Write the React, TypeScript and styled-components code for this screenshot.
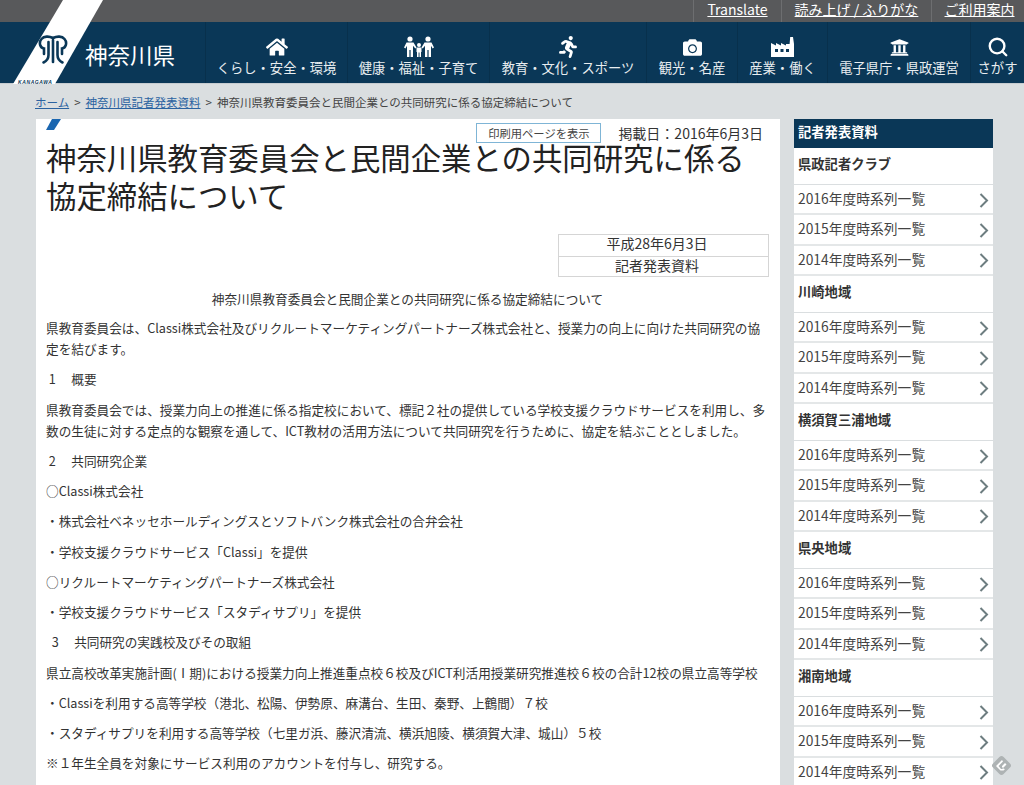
import React from 'react';
import styled, { createGlobalStyle } from 'styled-components';
import { FaHome, FaRunning, FaCamera, FaUniversity } from 'react-icons/fa';
import { FiSearch } from 'react-icons/fi';

const GlobalStyle = createGlobalStyle`
  html, body {
    margin: 0;
    height: 785px;
    overflow: hidden;
    background: #dadee0;
    color: #333;
    font-family: "Noto Sans CJK JP", "Noto Sans", sans-serif;
  }
  * { box-sizing: border-box; }
`;

const navItems = [
  { label: 'くらし・安全・環境', width: 142, icon: 'home' },
  { label: '健康・福祉・子育て', width: 142, icon: 'family' },
  { label: '教育・文化・スポーツ', width: 157, icon: 'run' },
  { label: '観光・名産', width: 91, icon: 'camera' },
  { label: '産業・働く', width: 90, icon: 'factory' },
  { label: '電子県庁・県政運営', width: 143, icon: 'bank' },
  { label: 'さがす', width: 54, icon: 'search' },
];

const paragraphs = [
  '県教育委員会は、Classi株式会社及びリクルートマーケティングパートナーズ株式会社と、授業力の向上に向けた共同研究の協\n定を結びます。',
  ' 1　 概要',
  '県教育委員会では、授業力向上の推進に係る指定校において、標記２社の提供している学校支援クラウドサービスを利用し、多\n数の生徒に対する定点的な観察を通して、ICT教材の活用方法について共同研究を行うために、協定を結ぶこととしました。',
  ' 2　 共同研究企業',
  '○Classi株式会社',
  '・株式会社ベネッセホールディングスとソフトバンク株式会社の合弁会社',
  '・学校支援クラウドサービス「Classi」を提供',
  '○リクルートマーケティングパートナーズ株式会社',
  '・学校支援クラウドサービス「スタディサプリ」を提供',
  '  3　 共同研究の実践校及びその取組',
  '県立高校改革実施計画(Ⅰ期)における授業力向上推進重点校６校及びICT利活用授業研究推進校６校の合計12校の県立高等学校',
  '・Classiを利用する高等学校（港北、松陽、伊勢原、麻溝台、生田、秦野、上鶴間）７校',
  '・スタディサプリを利用する高等学校（七里ガ浜、藤沢清流、横浜旭陵、横須賀大津、城山）５校',
  '※１年生全員を対象にサービス利用のアカウントを付与し、研究する。',
];

const groups = ['県政記者クラブ', '川崎地域', '横須賀三浦地域', '県央地域', '湘南地域'];
const years = ['2016', '2015', '2014'];

function NavIcon({ name }: { name: string }) {
  if (name === 'home') return <FaHome size={22} />;
  if (name === 'run') return <FaRunning size={22} />;
  if (name === 'camera') return <FaCamera size={19} />;
  if (name === 'bank') return <FaUniversity size={19} />;
  if (name === 'search') return <FiSearch size={22} strokeWidth={2.6} />;
  if (name === 'family') {
    return (
      <svg width="30" height="22" viewBox="0 0 30 22" fill="currentColor">
        <circle cx="6" cy="3" r="2.6" />
        <circle cx="24" cy="3" r="2.6" />
        <circle cx="15" cy="9" r="2" />
        <path d="M2.5 6.5h7l3 5-1.2 1-2.3-2.7V21H6.6v-7h-1.2v7H3V9.8L1.4 12.5 0 11.5z" />
        <path d="M20.5 6.5h7l2.5 5-1.4 1-1.6-2.7V21h-2.4v-7h-1.2v7H21V9.8L18.7 12.5l-1.2-1z" />
        <path d="M12.5 11.5h5V16h-.5v5h-1.5v-4.5h-.9V21h-1.6v-5h-.5z" />
      </svg>
    );
  }
  return (
    <svg width="24" height="20" viewBox="0 0 24 20" fill="currentColor">
      <path d="M0 6l5 2.6V6l5 2.6V6l5 2.6V7h3.6l.6-7H22l1 7v13H0zM4 12v3h3v-3zm5.500 0v3h3v-3zm5.500 0v3h3v-3z" fillRule="evenodd" />
    </svg>
  );
}

function Emblem() {
  return (
    <EmblemSvg viewBox="0 0 30 30" fill="none" stroke="#0a3757" strokeWidth="2.6" strokeLinecap="round">
      <path d="M15 5v22" />
      <path d="M10.500 7v13c0 4-2 6-5 7.500" />
      <path d="M19.500 7v13c0 4 2 6 5 7.500" />
      <path d="M15 3C11 1 6 1 3.500 4 .5 7.500 2 13 6 13.500V19" />
      <path d="M15 3c4-2 9-2 11.500 1 3 3.500 1.500 9-2.500 9.500V19" />
    </EmblemSvg>
  );
}

export default function App() {
  return (
    <>
      <GlobalStyle />
      <Stripe />
      <Emblem />
      <KanagawaMark>KANAGAWA</KanagawaMark>
      <UtilityBar>
        <UtilityLink $width={88}>Translate</UtilityLink>
        <UtilityLink $width={150}>読み上げ / ふりがな</UtilityLink>
        <UtilityLink $width={93}>ご利用案内</UtilityLink>
      </UtilityBar>
      <Header>
        <Brand>神奈川県</Brand>
        {navItems.map((item) => (
          <NavCell key={item.label} $width={item.width}>
            <IconSlot><NavIcon name={item.icon} /></IconSlot>
            <NavLabel>{item.label}</NavLabel>
          </NavCell>
        ))}
      </Header>
      <Breadcrumb>
        <Crumb>ホーム</Crumb><Sep>&gt;</Sep>
        <Crumb>神奈川県記者発表資料</Crumb><Sep>&gt;</Sep>
        <span>神奈川県教育委員会と民間企業との共同研究に係る協定締結について</span>
      </Breadcrumb>
      <Columns>
        <Main>
          <Accent />
          <MetaRow>
            <PrintButton>印刷用ページを表示</PrintButton>
            <PostDate>掲載日：2016年6月3日</PostDate>
          </MetaRow>
          <Title>神奈川県教育委員会と民間企業との共同研究に係る<br />協定締結について</Title>
          <InfoTable>
            <InfoRow>平成28年6月3日</InfoRow>
            <InfoRow>記者発表資料</InfoRow>
          </InfoTable>
          <Lead>神奈川県教育委員会と民間企業との共同研究に係る協定締結について</Lead>
          {paragraphs.map((p) => (
            <Paragraph key={p}>{p}</Paragraph>
          ))}
        </Main>
        <Sidebar>
          <SideHeading>記者発表資料</SideHeading>
          {groups.map((g) => (
            <div key={g}>
              <GroupTitle>{g}</GroupTitle>
              {years.map((y) => (
                <SideLink key={y}>
                  <SideLinkText>{y}年度時系列一覧</SideLinkText>
                  <svg width="10" height="15" viewBox="0 0 10 15" fill="none" stroke="#6d7d80" strokeWidth="2">
                    <path d="M1.500 1l6.500 6.500L1.500 14" />
                  </svg>
                </SideLink>
              ))}
            </div>
          ))}
        </Sidebar>
      </Columns>
      <FloatBadge>
        <svg width="14" height="14" viewBox="0 0 14 14" fill="#fff">
          <path d="M7 1L1 7l4.500 4.500h3L10 10H6L3.500 7 8 2.500z" />
          <path d="M7 7l3-3 1.500 1.500L8.500 8.500H7zM7 9.500h2.500L8.500 8.700z" />
        </svg>
      </FloatBadge>
    </>
  );
}

const Stripe = styled.div`
  position: absolute;
  left: 13px;
  top: 0;
  width: 90px;
  height: 84px;
  background: #fff;
  clip-path: polygon(50px 0, 90px 0, 42px 84px, 0 84px);
  z-index: 2;
`;

const EmblemSvg = styled.svg`
  position: absolute;
  left: 38px;
  top: 35px;
  width: 30px;
  height: 30px;
  z-index: 3;
`;

const KanagawaMark = styled.span`
  position: absolute;
  left: 18px;
  top: 79px;
  font-family: "Liberation Sans", sans-serif;
  font-size: 5px;
  line-height: 6px;
  font-weight: 700;
  font-style: italic;
  letter-spacing: 0.6px;
  color: #0a3757;
  z-index: 3;
`;

const UtilityBar = styled.div`
  display: flex;
  justify-content: flex-end;
  height: 22px;
  background: #58595b;
`;

const UtilityLink = styled.a<{ $width: number }>`
  width: ${(p) => p.$width}px;
  border-left: 1px solid #6d6e70;
  color: #fff;
  font-size: 14px;
  line-height: 19px;
  text-align: center;
  text-decoration: underline;
  &:last-child {
    padding-left: 3px;
  }
`;

const Header = styled.header`
  display: flex;
  height: 62px;
  background: #0a3757;
  border-bottom: 1px solid #c6ccd0;
`;

const Brand = styled.div`
  width: 205px;
  padding: 17px 0 0 85px;
  color: #fff;
  font-size: 22.5px;
  line-height: 30px;
`;

const NavCell = styled.div<{ $width: number }>`
  display: flex;
  flex-direction: column;
  align-items: center;
  width: ${(p) => p.$width}px;
  flex: none;
  border-left: 1px solid #08304c;
  color: #fff;
`;

const IconSlot = styled.div`
  display: flex;
  align-items: center;
  justify-content: center;
  height: 26px;
  margin: 12px 0 -2px;
`;

const NavLabel = styled.div`
  font-size: 13.3px;
  line-height: 20px;
  white-space: nowrap;
  color: #e8edf0;
`;

const Breadcrumb = styled.nav`
  display: flex;
  align-items: center;
  height: 35px;
  padding-left: 35px;
  font-size: 11.5px;
  color: #444;
  white-space: nowrap;
`;

const Crumb = styled.a`
  color: #2a62a0;
  text-decoration: underline;
`;

const Sep = styled.span`
  margin: 0 5px;
`;

const Columns = styled.div`
  display: flex;
  gap: 14px;
  padding-left: 36px;
`;

const Main = styled.main`
  position: relative;
  width: 744px;
  height: 700px;
  padding: 4px 11px 0 10px;
  background: #fff;
`;

const Accent = styled.div`
  position: absolute;
  left: 10px;
  top: 0;
  width: 15px;
  height: 11px;
  background: #1a66b0;
  clip-path: polygon(6px 0, 15px 0, 8px 11px, 0 11px);
`;

const MetaRow = styled.div`
  display: flex;
  align-items: center;
  justify-content: flex-end;
  gap: 17px;
  height: 20px;
  margin-bottom: -5px;
  padding-right: 6px;
`;

const PrintButton = styled.div`
  width: 125px;
  height: 20px;
  border: 1px solid #7fb5d6;
  font-size: 11.3px;
  line-height: 18px;
  text-align: center;
  color: #444;
`;

const PostDate = styled.div`
  font-size: 14px;
  line-height: 19px;
  color: #333;
`;

const Title = styled.h1`
  margin: 0 0 20px;
  font-size: 30.4px;
  font-weight: 400;
  line-height: 38px;
  color: #222;
  white-space: nowrap;
`;

const InfoTable = styled.div`
  width: 211px;
  margin-left: auto;
  border: 1px solid #d5d5d5;
`;

const InfoRow = styled.div`
  height: 20.5px;
  padding-right: 13px;
  font-size: 14px;
  line-height: 17px;
  text-align: center;
  & + & {
    border-top: 1px solid #d5d5d5;
  }
`;

const Paragraph = styled.p`
  margin: 0 0 9.25px;
  font-size: 12.65px;
  line-height: 21px;
  white-space: pre;
  color: #333;
`;

const Lead = styled(Paragraph)`
  margin: 11px 0 8px;
  text-align: center;
`;

const Sidebar = styled.aside`
  width: 199px;
  background: #fff;
  height: 700px;
  overflow: hidden;
`;

const SideHeading = styled.h2`
  margin: 0;
  height: 29px;
  padding-left: 4px;
  background: #0a3757;
  color: #fff;
  font-size: 13.3px;
  font-weight: 700;
  line-height: 26px;
`;

const GroupTitle = styled.h3`
  margin: 0;
  height: 37px;
  padding: 6px 0 0 4px;
  border-bottom: 1px solid #dadee0;
  font-size: 13.3px;
  font-weight: 700;
  line-height: 20px;
  color: #333;
`;

const SideLink = styled.a`
  display: flex;
  align-items: center;
  justify-content: space-between;
  height: 30.33px;
  padding: 2px 4px 0 4px;
  border-bottom: 2px solid #e4e7e8;
  font-size: 13.8px;
  color: #444;
`;

const SideLinkText = styled.span`
  margin-top: -4px;
`;

const FloatBadge = styled.div`
  position: fixed;
  left: 991px;
  top: 755px;
  display: flex;
  align-items: center;
  justify-content: center;
  width: 21px;
  height: 21px;
  &::before {
    content: '';
    position: absolute;
    inset: 3px;
    background: #aeb3b4;
    border-radius: 3px;
    transform: rotate(45deg);
  }
  svg {
    position: relative;
  }
`;
